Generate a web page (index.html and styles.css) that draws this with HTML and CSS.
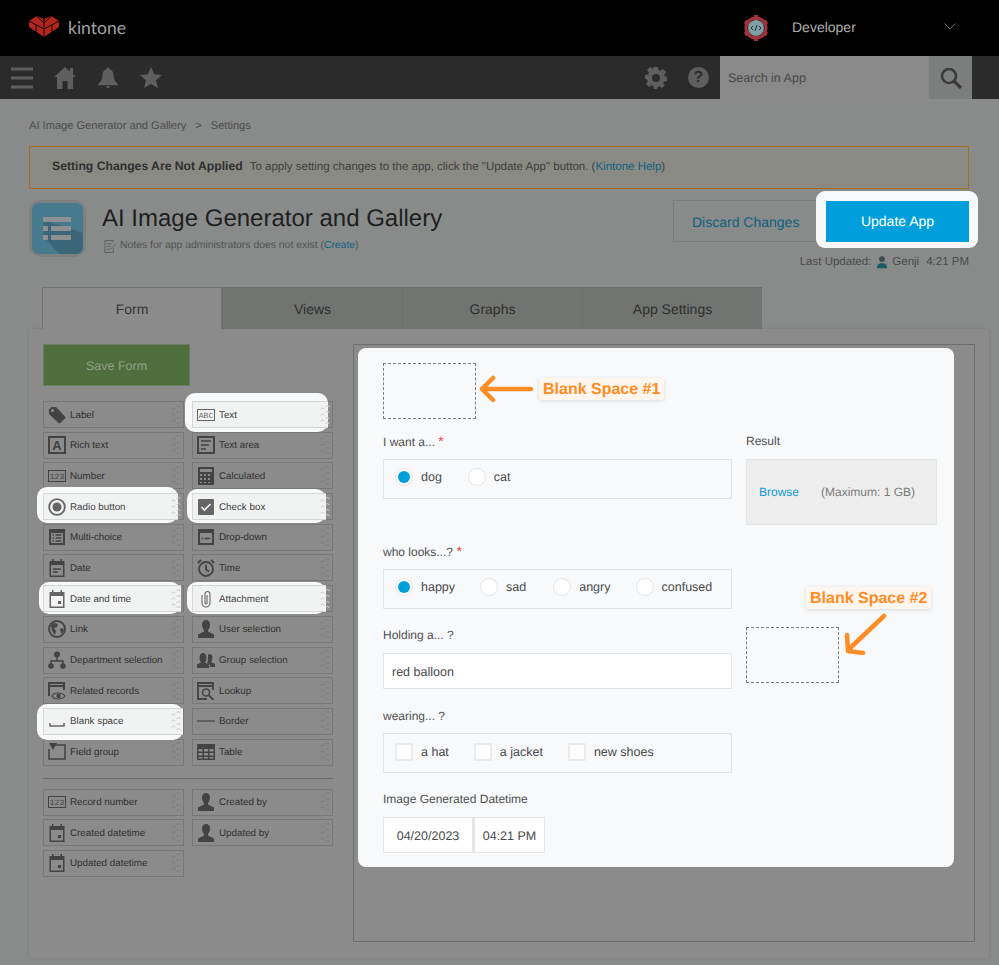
FILE: index.html
```html
<!DOCTYPE html>
<html lang="en">
<head>
<meta charset="utf-8">
<title>AI Image Generator and Gallery - Settings</title>
<link rel="stylesheet" href="styles.css">
</head>
<body>
<svg class="defs" width="0" height="0" aria-hidden="true">
  <symbol id="grip" viewBox="0 0 10 20"><path d="M1 4.500a1.500 1.500 0 0 1 3 0M1 10.500a1.500 1.500 0 0 1 3 0M1 16.500a1.500 1.500 0 0 1 3 0M6 2a1.500 1.500 0 0 1 3 0M6 8a1.500 1.500 0 0 1 3 0M6 14a1.500 1.500 0 0 1 3 0M6 19a1.500 1.500 0 0 1 3 0" fill="none" stroke="currentColor"/></symbol>
  <symbol id="i-label" viewBox="0 0 18 18"><path fill-rule="evenodd" d="M1 3.500 3.500 1H8l9 9.500a1.500 1.500 0 0 1 0 2L12.500 17a1.500 1.500 0 0 1-2 0L1 8zM4.500 3a1.500 1.500 0 1 0 0 3 1.500 1.500 0 0 0 0-3z" fill="currentColor"/></symbol>
  <symbol id="i-area" viewBox="0 0 18 18"><rect x="1" y="1" width="16" height="16" fill="none" stroke="currentColor" stroke-width="2"/><path d="M4 5h10M4 9h8M4 13h5" stroke="currentColor" stroke-width="1.500"/></symbol>
  <symbol id="i-calc" viewBox="0 0 18 18"><path fill-rule="evenodd" d="M1 0h16v18H1zM3 2v3h12V2zM3 7v2h2V7zm4 0v2h2V7zm4 0v2h2V7zM3 11v2h2v-2zm4 0v2h2v-2zm4 0v2h2v-2zM3 15v1h2v-1zm4 0v1h2v-1zm4 0v1h2v-1z" fill="currentColor"/></symbol>
  <symbol id="i-radio" viewBox="0 0 18 18"><circle cx="9" cy="9" r="7.800" fill="none" stroke="currentColor" stroke-width="1.800"/><circle cx="9" cy="9" r="4.500" fill="currentColor"/></symbol>
  <symbol id="i-check" viewBox="0 0 18 18"><rect x="1" y="1" width="16" height="16" rx="1" fill="currentColor"/><path d="m4.500 9 3 3 6-6" fill="none" stroke="#f1f3f2" stroke-width="1.600"/></symbol>
  <symbol id="i-multi" viewBox="0 0 18 18"><path fill-rule="evenodd" d="M1 1h16v16H1zM3 5v10h12V5z" fill="currentColor"/><path d="M4.500 7h1.500M7.500 7h6M4.500 10h1.500M7.500 10h6M4.500 13h1.500M7.500 13h6" stroke="currentColor" stroke-width="1.500"/></symbol>
  <symbol id="i-drop" viewBox="0 0 18 18"><path fill-rule="evenodd" d="M1 1h16v16H1zM3 5v10h12V5z" fill="currentColor"/><path d="M4.500 10.500h1.500M7.500 10.500h6" stroke="currentColor" stroke-width="1.500"/></symbol>
  <symbol id="i-date" viewBox="0 0 18 18"><path fill-rule="evenodd" d="M1.500 2H4V0h1.500v2h7V0H14v2h2.500v16h-15zM3 6v10.500h12V6z" fill="currentColor"/><path d="M5 10h8M5 13h5" stroke="currentColor" stroke-width="1.500"/></symbol>
  <symbol id="i-time" viewBox="0 0 18 18"><circle cx="9" cy="10" r="7" fill="none" stroke="currentColor" stroke-width="1.800"/><path d="M9 6v4.500l3 2M1 4l3-3M17 4l-3-3" fill="none" stroke="currentColor" stroke-width="1.800"/></symbol>
  <symbol id="i-dt" viewBox="0 0 18 18"><path fill-rule="evenodd" d="M1.500 2H4V0h1.500v2h7V0H14v2h2.500v16h-15zM3 6v10.500h12V6z" fill="currentColor"/><rect x="10" y="11" width="3" height="3" fill="currentColor"/></symbol>
  <symbol id="i-clip" viewBox="0 0 18 18"><path d="M5 5v8a4 4 0 0 0 8 0V4a2.500 2.500 0 0 0-5 0v9a1 1 0 0 0 2 0V5" fill="none" stroke="currentColor" stroke-width="1.100"/></symbol>
  <symbol id="i-link" viewBox="0 0 18 18"><circle cx="9" cy="9" r="8" fill="none" stroke="currentColor" stroke-width="1.800"/><path d="M3 5l3-2 4 1-1 3-3 1 2 3-1 4-3-4zM12 9l3-1 1 3-3 3z" fill="currentColor"/></symbol>
  <symbol id="i-user" viewBox="0 0 18 18"><path d="M9 0c2.500 0 4 2 4 4.500S12 9 11 10v1.500l6 3V18H1v-3.500l6-3V10C6 9 5 7 5 4.500S6.500 0 9 0z" fill="currentColor"/></symbol>
  <symbol id="i-dept" viewBox="0 0 18 18"><circle cx="9" cy="3.500" r="3" fill="currentColor"/><circle cx="3" cy="15" r="2.800" fill="currentColor"/><circle cx="15" cy="15" r="2.800" fill="currentColor"/><path d="M9 6v4M3 13v-3h12v3" fill="none" stroke="currentColor" stroke-width="1.400"/></symbol>
  <symbol id="i-group" viewBox="0 0 18 18"><path d="M12.500 3c2 0 3 1.500 3 3.500S14.700 10 14 11l4 2v3h-5v-2l-3-2c.7-1 1-3 1-5V3.500z" fill="currentColor"/><path d="M6 2c2 0 3.500 2 3.500 4.500S8.700 10.500 8 11.500l4 2V17H0v-3.500l4-2C3.300 10.500 2.500 9 2.500 6.500S4 2 6 2z" fill="currentColor"/></symbol>
  <symbol id="i-rel" viewBox="0 0 18 18"><path d="M1 14V1h15v7M1 4h15" fill="none" stroke="currentColor" stroke-width="2"/><path d="M4 14c2-4 10-4 13 0-3 4-11 4-13 0z" fill="none" stroke="currentColor" stroke-width="1.200"/><circle cx="10.500" cy="14" r="2.200" fill="currentColor"/></symbol>
  <symbol id="i-look" viewBox="0 0 18 18"><path d="M16 8V1H1v16h9M1 4h15" fill="none" stroke="currentColor" stroke-width="1.800"/><circle cx="9" cy="10.500" r="3.500" fill="none" stroke="currentColor" stroke-width="1.500"/><path d="m11.500 13 5 5" stroke="currentColor" stroke-width="1.800"/></symbol>
  <symbol id="i-blank" viewBox="0 0 18 18"><path d="M2 11v3h14v-3" fill="none" stroke="currentColor" stroke-width="1.500"/></symbol>
  <symbol id="i-border" viewBox="0 0 18 18"><path d="M0 9h18" stroke="currentColor" stroke-width="1.200"/></symbol>
  <symbol id="i-fgroup" viewBox="0 0 18 18"><path d="M6 2h11v14H1V6" fill="none" stroke="currentColor" stroke-width="1.500"/><path d="M1 0h8L5 7z" fill="currentColor"/></symbol>
  <symbol id="i-table" viewBox="0 0 18 18"><path fill-rule="evenodd" d="M0 1h18v16H0zM1.500 6v2.500h4V6zm5.500 0v2.500h4V6zm5.500 0v2.500h4V6zM1.500 10v2.500h4V10zm5.500 0v2.500h4V10zm5.500 0v2.500h4V10zM1.500 14v1.500h4V14zm5.500 0v1.500h4V14zm5.500 0v1.500h4V14z" fill="currentColor"/></symbol>
</svg>

<header class="top">
  <svg class="logo" viewBox="0 0 30 21" aria-hidden="true"><path d="M0 5 7.500 0 15 3l7.500-3L30 5v6L15 21 0 11z" fill="#b3261e"/><path d="M0 5l15 8 15-8M15 3v18M7.500 0 15 7l7.500-7M7 9v7M23 9v7" fill="none" stroke="#1a0505" stroke-width="1"/></svg>
  <span class="brand">kintone</span>
  <span class="grow"></span>
  <svg class="avatar" viewBox="0 0 26 28" aria-hidden="true"><path d="M13 1v5M13 22v5M2 7.500l4 2.500M24 7.500 20 10M2 20.500 6 18M24 20.500 20 18" stroke="#a5323a" stroke-width="4"/><circle cx="13" cy="14" r="10" fill="none" stroke="#a5323a" stroke-width="3"/><circle cx="13" cy="14" r="8" fill="#7f9fa7"/><path d="m10 12-2 2 2 2M16 12l2 2-2 2M14 11l-2 6" fill="none" stroke="#1c2d33" stroke-width="1"/></svg>
  <span class="who">Developer</span>
  <svg class="chev" viewBox="0 0 12 7" aria-hidden="true"><path d="m.5.500 5.500 5.500L11.500.500" fill="none" stroke="#6b6b6b"/></svg>
</header>

<nav class="bar">
  <svg class="nav-i burger" viewBox="0 0 22 22" aria-hidden="true"><path d="M0 2h22M0 11h22M0 20h22" stroke="#5e5e5e" stroke-width="3"/></svg>
  <svg class="nav-i home" viewBox="0 0 22 22" aria-hidden="true"><path d="M11 0l5 4.500V1h3v6.200l3 2.800h-3v12h-5.500v-8h-5v8H3V10H0z" fill="#5e5e5e"/></svg>
  <svg class="nav-i bell" viewBox="0 0 21 22" aria-hidden="true"><path d="M10.500 0c1 0 1.500.7 1.500 1.500C15 2.500 16.500 5 16.500 9c0 4 1.500 6 4.500 8.500v1H0v-1C3 15 4.500 13 4.500 9c0-4 1.500-6.500 4.500-7.500C9 .7 9.500 0 10.500 0zM8.500 19.500h4a2 2 0 0 1-4 0z" fill="#5e5e5e"/></svg>
  <svg class="nav-i star" viewBox="0 0 22 22" aria-hidden="true"><path d="M11 0l3.200 7.300 7.800.7-5.900 5.200 1.800 7.800L11 17l-6.900 4 1.800-7.800L0 8l7.800-.7z" fill="#5e5e5e"/></svg>
  <span class="grow"></span>
  <svg class="nav-i gear" viewBox="0 0 22 22" aria-hidden="true"><path fill-rule="evenodd" d="M9 0h4l.6 3 1.800.8L18 2l3 3-1.800 2.600.8 1.800 2 .6v4l-3 .6-.8 1.800L20 18l-3 3-2.600-1.800-1.800.8-.6 2H9l-.6-3-1.800-.8L4 20l-3-3 1.800-2.600-.8-1.800-2-.6V8l3-.6.8-1.800L2 3l3-3 2.600 1.800L8.400 1zM11 7a4 4 0 1 0 0 8 4 4 0 0 0 0-8z" fill="#5e5e5e"/></svg>
  <span class="help">?</span>
  <div class="search">
    <span class="search-text">Search in App</span>
    <span class="search-btn"><svg viewBox="0 0 22 22" aria-hidden="true"><circle cx="9" cy="9" r="7" fill="none" stroke="#3a3a3a" stroke-width="2.600"/><path d="m14 14 7 7" stroke="#3a3a3a" stroke-width="3.200"/></svg></span>
  </div>
</nav>

<main class="page">
  <p class="crumb">AI Image Generator and Gallery<span class="sep">&gt;</span>Settings</p>
  <p class="notice"><b>Setting Changes Are Not Applied</b>To apply setting changes to the app, click the "Update App" button. (<a>Kintone Help</a>)</p>

  <section class="head">
    <div class="app-ico"><svg viewBox="0 0 51 51" aria-hidden="true"><rect width="51" height="51" rx="7" fill="#47798f"/><path d="M11 17 51 30v14a7 7 0 0 1-7 7H27L11 33z" fill="#3b6579"/><path d="M11 14h28v5H11zM11 23h5v5h-5zM19 23h20v5H19zM11 32h5v5h-5zM19 32h20v5H19z" fill="#8d9192"/></svg></div>
    <div class="app-title">
      <h1>AI Image Generator and Gallery</h1>
      <p class="notes"><svg viewBox="0 0 14 14" aria-hidden="true"><path d="M10 9v4.500H1V.5h9v2M3 4h5M3 7h4M3 10h3M7 10l6-6" fill="none" stroke="#5e605f"/></svg>Notes for app administrators does not exist (<a>Create</a>)</p>
    </div>
    <div class="actions">
      <div class="btns">
        <span class="discard">Discard Changes</span>
        <span class="update-spot"><span class="update">Update App</span></span>
      </div>
      <p class="updated">Last Updated:<svg viewBox="0 0 12 15" aria-hidden="true"><circle cx="6" cy="4" r="3.500" fill="#3d4a4c"/><path d="M0 15c0-5 2-6 6-6s6 1 6 6z" fill="#1d5a68"/></svg>Genji<span class="at">4:21 PM</span></p>
    </div>
  </section>

  <div class="tabs">
    <span class="tab on">Form</span><span class="tab">Views</span><span class="tab">Graphs</span><span class="tab">App Settings</span>
  </div>

  <section class="panel">
    <aside class="side">
      <div class="save">Save Form</div>
      <div class="palette">
        <div class="item"><svg class="ico"><use href="#i-label"/></svg><span>Label</span><svg class="grip"><use href="#grip"/></svg></div>
        <div class="item lit s-text"><svg class="ico" viewBox="0 0 18 18"><rect x=".5" y="3.500" width="17" height="11" fill="none" stroke="currentColor"/><text x="9" y="11.800" text-anchor="middle" class="glyph-s">ABC</text></svg><span>Text</span><svg class="grip"><use href="#grip"/></svg></div>
        <div class="item"><svg class="ico" viewBox="0 0 18 18"><rect x="1" y="1" width="16" height="16" fill="none" stroke="currentColor" stroke-width="2"/><text x="9" y="14" text-anchor="middle" class="glyph-a">A</text></svg><span>Rich text</span><svg class="grip"><use href="#grip"/></svg></div>
        <div class="item"><svg class="ico"><use href="#i-area"/></svg><span>Text area</span><svg class="grip"><use href="#grip"/></svg></div>
        <div class="item"><svg class="ico" viewBox="0 0 18 18"><rect x=".5" y="3.500" width="17" height="11" fill="none" stroke="currentColor"/><text x="9" y="12" text-anchor="middle" class="glyph-s">123</text></svg><span>Number</span><svg class="grip"><use href="#grip"/></svg></div>
        <div class="item"><svg class="ico"><use href="#i-calc"/></svg><span>Calculated</span><svg class="grip"><use href="#grip"/></svg></div>
        <div class="item lit s-radio"><svg class="ico"><use href="#i-radio"/></svg><span>Radio button</span><svg class="grip"><use href="#grip"/></svg></div>
        <div class="item lit s-check"><svg class="ico"><use href="#i-check"/></svg><span>Check box</span><svg class="grip"><use href="#grip"/></svg></div>
        <div class="item"><svg class="ico"><use href="#i-multi"/></svg><span>Multi-choice</span><svg class="grip"><use href="#grip"/></svg></div>
        <div class="item"><svg class="ico"><use href="#i-drop"/></svg><span>Drop-down</span><svg class="grip"><use href="#grip"/></svg></div>
        <div class="item"><svg class="ico"><use href="#i-date"/></svg><span>Date</span><svg class="grip"><use href="#grip"/></svg></div>
        <div class="item"><svg class="ico"><use href="#i-time"/></svg><span>Time</span><svg class="grip"><use href="#grip"/></svg></div>
        <div class="item lit s-dt"><svg class="ico"><use href="#i-dt"/></svg><span>Date and time</span><svg class="grip"><use href="#grip"/></svg></div>
        <div class="item lit s-att"><svg class="ico"><use href="#i-clip"/></svg><span>Attachment</span><svg class="grip"><use href="#grip"/></svg></div>
        <div class="item"><svg class="ico"><use href="#i-link"/></svg><span>Link</span><svg class="grip"><use href="#grip"/></svg></div>
        <div class="item"><svg class="ico"><use href="#i-user"/></svg><span>User selection</span><svg class="grip"><use href="#grip"/></svg></div>
        <div class="item"><svg class="ico"><use href="#i-dept"/></svg><span>Department selection</span><svg class="grip"><use href="#grip"/></svg></div>
        <div class="item"><svg class="ico"><use href="#i-group"/></svg><span>Group selection</span><svg class="grip"><use href="#grip"/></svg></div>
        <div class="item"><svg class="ico"><use href="#i-rel"/></svg><span>Related records</span><svg class="grip"><use href="#grip"/></svg></div>
        <div class="item"><svg class="ico"><use href="#i-look"/></svg><span>Lookup</span><svg class="grip"><use href="#grip"/></svg></div>
        <div class="item lit s-blank"><svg class="ico"><use href="#i-blank"/></svg><span>Blank space</span><svg class="grip"><use href="#grip"/></svg></div>
        <div class="item"><svg class="ico"><use href="#i-border"/></svg><span>Border</span><svg class="grip"><use href="#grip"/></svg></div>
        <div class="item"><svg class="ico"><use href="#i-fgroup"/></svg><span>Field group</span><svg class="grip"><use href="#grip"/></svg></div>
        <div class="item"><svg class="ico"><use href="#i-table"/></svg><span>Table</span><svg class="grip"><use href="#grip"/></svg></div>
      </div>
      <hr class="rule">
      <div class="palette">
        <div class="item"><svg class="ico" viewBox="0 0 18 18"><rect x=".5" y="3.500" width="17" height="11" fill="none" stroke="currentColor"/><text x="9" y="12" text-anchor="middle" class="glyph-s">123</text></svg><span>Record number</span><svg class="grip"><use href="#grip"/></svg></div>
        <div class="item"><svg class="ico"><use href="#i-user"/></svg><span>Created by</span><svg class="grip"><use href="#grip"/></svg></div>
        <div class="item"><svg class="ico"><use href="#i-dt"/></svg><span>Created datetime</span><svg class="grip"><use href="#grip"/></svg></div>
        <div class="item"><svg class="ico"><use href="#i-user"/></svg><span>Updated by</span><svg class="grip"><use href="#grip"/></svg></div>
        <div class="item"><svg class="ico"><use href="#i-dt"/></svg><span>Updated datetime</span><svg class="grip"><use href="#grip"/></svg></div>
      </div>
    </aside>

    <div class="canvas">
      <div class="card">
        <div class="col-main">
          <div class="blank"></div>
          <div class="f-label l-first">I want a... <em>*</em></div>
          <div class="choice">
            <span class="opt w-dog"><i class="dot on"></i>dog</span>
            <span class="opt"><i class="dot"></i>cat</span>
          </div>
          <div class="f-label l-who">who looks...? <em>*</em></div>
          <div class="choice">
            <span class="opt w-happy"><i class="dot on"></i>happy</span>
            <span class="opt w-sad"><i class="dot"></i>sad</span>
            <span class="opt w-angry"><i class="dot"></i>angry</span>
            <span class="opt"><i class="dot"></i>confused</span>
          </div>
          <div class="f-label l-hold">Holding a... ?</div>
          <div class="input">red balloon</div>
          <div class="f-label l-wear">wearing... ?</div>
          <div class="choice tight">
            <span class="opt w-hat"><i class="box"></i>a hat</span>
            <span class="opt w-jacket"><i class="box"></i>a jacket</span>
            <span class="opt"><i class="box"></i>new shoes</span>
          </div>
          <div class="f-label l-img">Image Generated Datetime</div>
          <div class="dt"><span class="dt-d">04/20/2023</span><span class="dt-t">04:21 PM</span></div>
        </div>
        <div class="col-side">
          <div class="f-label l-res">Result</div>
          <div class="file"><a>Browse</a><span>(Maximum: 1 GB)</span></div>
          <div class="blank b2"></div>
        </div>
        <span class="tag t1">Blank Space #1</span>
        <span class="tag t2">Blank Space #2</span>
        <svg class="arrow a1" viewBox="0 0 56 30" aria-hidden="true"><path d="M53 15H5M15 4 4 15l11 11" fill="none" stroke="#ff8c24" stroke-width="4.500" stroke-linecap="round" stroke-linejoin="round"/></svg>
        <svg class="arrow a2" viewBox="0 0 44 42" aria-hidden="true"><path d="M41 3 5 37M4 22l1 16 15 2" fill="none" stroke="#ff8c24" stroke-width="4.500" stroke-linecap="round" stroke-linejoin="round"/></svg>
      </div>
    </div>
  </section>
</main>
</body>
</html>
```

FILE: styles.css
```css
* { box-sizing: border-box; }
html, body { margin: 0; height: 965px; overflow: hidden; }
body { background: #7f807f; font-family: "Liberation Sans", Arial, sans-serif; color: #3a3a3a; text-rendering: geometricPrecision; }
p, h1 { margin: 0; }
.defs { position: absolute; }
.grow { flex: 1; }

.top { height: 56px; background: #000; display: flex; align-items: center; padding-left: 29px; }
.logo { width: 30px; height: 21px; margin-top: -3px; }
.brand { margin-left: 9px; font-size: 17.500px; color: #a3a3a3; font-family: "Lato", sans-serif; margin-top: -2px; }
.avatar { width: 26px; height: 28px; margin-top: -1px; }
.who { margin-left: 23px; font-size: 14px; color: #aeaeae; width: 152px; margin-top: -2px; }
.chev { width: 12px; height: 7px; margin-right: 43px; margin-top: -4px; }

.bar { height: 43px; background: #2b2b2b; display: flex; align-items: center; padding-left: 11px; padding-right: 27px; }
.nav-i { width: 22px; height: 22px; margin-right: 21px; }
.home { margin-right: 22px; }
.bell { width: 20px; margin-right: 22px; }
.help { width: 21px; height: 21px; border-radius: 50%; background: #5e5e5e; color: #2b2b2b; font-weight: 700; font-size: 16px; line-height: 21px; text-align: center; margin-right: 11px; }
.search { width: 252px; height: 43px; display: flex; background: #888988; }
.search-text { flex: 1; font-size: 12.500px; color: #484a49; line-height: 44px; padding-left: 8px; }
.search-btn { width: 43px; background: #7c7e7d; display: flex; align-items: center; justify-content: center; }
.search-btn svg { width: 22px; height: 22px; }

.page { height: 866px; background: #898b8a; padding: 0 0 0 29px; }
.crumb { padding-top: 21px; font-size: 11.100px; line-height: 13px; color: #4b4d4c; }
.sep { margin: 0 9px; }
.notice { margin-top: 13px; width: 940px; height: 43px; border: 1px solid #a36f1f; background: #8a8a84; padding-left: 22px; line-height: 39px; font-size: 11.500px; color: #3f403f; }
.notice b { font-size: 12.200px; margin-right: 7px; color: #2f302f; }
.notice a, .notes a { color: #0f637f; }

.head { display: flex; margin-top: 11px; height: 87px; width: 940px; }
.app-ico { width: 57px; height: 57px; border-radius: 12px; background: #7c807f; padding: 3px; }
.app-ico svg { width: 51px; height: 51px; display: block; }
.app-title { margin-left: 16px; flex: 1; }
h1 { font-weight: 400; font-size: 24px; line-height: 30px; color: #1e1f1f; margin-top: 4px; }
.notes { margin-top: 5px; margin-left: 2px; font-size: 10.400px; line-height: 14px; color: #525453; display: flex; align-items: center; white-space: pre; }
.notes svg { width: 13px; height: 13px; margin-right: 3px; }
.actions { width: 296px; }
.btns { display: flex; }
.discard { width: 153px; height: 42px; border: 1px solid #7b7d7c; border-right: 0; color: #0f637f; font-size: 14px; line-height: 42px; padding-left: 18px; }
.update-spot { position: relative; width: 143px; height: 41px; margin-top: 1px; }
.update-spot::before { content: ""; position: absolute; left: -10px; right: -9px; top: -10px; bottom: -6px; background: #f8f9fb; border-radius: 9px; }
.update { position: relative; display: block; height: 41px; background: #009fdb; color: #fff; font-size: 14px; line-height: 41px; text-align: center; }
.updated { display: flex; justify-content: flex-end; align-items: center; margin-top: 12px; font-size: 11.500px; line-height: 16px; color: #4a4c4b; }
.updated svg { width: 10px; height: 14px; margin: 0 5px 0 6px; }
.at { margin-left: 7px; }

.tabs { display: flex; margin-left: 13px; height: 42px; }
.tab { width: 180px; background: #727472; border-top: 1px solid #6b6d6b; text-align: center; font-size: 14px; line-height: 42px; color: #2e2f2e; }
.tab + .tab { border-left: 1px solid #6c6e6c; }
.tab.on { background: #8b8b8b; border: 1px solid #727372; border-bottom: 0; color: #353535; }

.panel { width: 960px; height: 629px; background: #8b8b8b; display: flex; padding: 15px 14px 16px 14px; box-shadow: 0 0 3px rgba(0,0,0,.12); }
.side { width: 290px; margin-right: 20px; }
.save { width: 147px; height: 42px; background: #4e6e3e; border: 1px solid #6a7b60; color: #8fa083; font-size: 12.500px; line-height: 43px; text-align: center; }
.palette { display: grid; grid-template-columns: 141px 141px; column-gap: 8px; row-gap: 3.700px; grid-auto-rows: 27px; }
.save + .palette { margin-top: 15px; }
.rule { border: 0; border-top: 1px solid #6d6f6d; margin: 12px 0 10px; width: 290px; }

.item { display: flex; align-items: center; height: 27px; border: 1px solid #777977; padding-left: 4px; font-size: 9.800px; color: #303030; }
.ico { width: 18px; height: 18px; margin-right: 4px; color: #434343; flex: none; }
.item span { flex: 1; white-space: nowrap; padding-top: 1px; }
.grip { width: 10px; height: 20px; margin-right: 2px; color: #7a7c7a; flex: none; }

.lit { position: relative; color: #424242; }
.lit::before { content: ""; position: absolute; left: var(--l); right: var(--r); top: var(--t); bottom: var(--b); background: #f8f9fb; border-radius: 10px; }
.lit::after { content: ""; position: absolute; left: -1px; right: var(--r); top: -1px; bottom: -1px; background: #f1f3f2; border: 1px solid #d5d8d6; border-right: 0; }
.lit .ico, .lit span, .lit .grip { position: relative; z-index: 1; }
.lit .ico { color: #666; }
.lit .grip { color: #c8cbc9; }
.s-text { --l: -8px; --r: 4px; --t: -9px; --b: -5px; }
.s-radio { --l: -7px; --r: 5px; --t: -7px; --b: -4px; }
.s-check { --l: -6px; --r: 6px; --t: -5px; --b: -4px; }
.s-dt { --l: -5px; --r: 2px; --t: -4px; --b: -3px; }
.s-att { --l: -6px; --r: 6px; --t: -4px; --b: -3px; }
.s-blank { --l: -7px; --r: 0px; --t: -5px; --b: -6px; }

.glyph-a { font: 700 13px "Liberation Sans", sans-serif; fill: currentColor; }
.glyph-s { font: 400 8px "Liberation Mono", monospace; fill: currentColor; }

.canvas { width: 622px; height: 598px; border: 1px solid #6d6f6d; padding: 3px 0 0 4px; }
.card { position: relative; width: 596px; height: 519px; background: #f8f9fb; border-radius: 8px; padding: 15px 17px 0 25px; display: flex; gap: 14px; color: #4a4a4a; font-size: 12.500px; }
.col-main { width: 349px; }
.col-side { width: 191px; }
.blank { width: 93px; height: 56px; border: 1px dashed #7d7d7d; }
.f-label { height: 18px; line-height: 18px; font-size: 12px; color: #4f4f4f; }
.f-label em { color: #ef3b3b; font-style: normal; font-size: 14px; }
.l-first { margin-top: 13px; }
.l-who { margin-top: 43px; }
.l-hold { margin-top: 17px; }
.l-wear { margin-top: 18px; }
.l-img { margin-top: 17px; }
.l-res { margin-top: 69px; }
.choice { margin-top: 9px; width: 349px; height: 40px; border: 1px solid #e2e4e5; display: flex; align-items: center; padding: 0 0 4px 11px; }
.tight { margin-top: 8px; padding-bottom: 2px; }
.opt { display: flex; align-items: center; }
.dot { width: 18px; height: 18px; border-radius: 50%; border: 1px solid #e5e6e7; background: #fff; margin-right: 8px; position: relative; }
.dot.on::after { content: ""; position: absolute; inset: 2px; border-radius: 50%; background: #009fdb; }
.box { width: 18px; height: 18px; background: #fff; border: 2px solid #eaebec; margin-right: 8px; }
.w-dog { margin-right: 26px; }
.w-happy { margin-right: 25px; }
.w-sad { margin-right: 27px; }
.w-angry { margin-right: 25px; }
.w-hat { margin-right: 25px; }
.w-jacket { margin-right: 25px; }
.input { margin-top: 9px; width: 349px; height: 36px; background: #fff; border: 1px solid #e2e4e5; line-height: 36px; padding-left: 8px; }
.dt { margin-top: 9px; display: flex; height: 36px; line-height: 36px; }
.dt-d, .dt-t { background: #fff; border: 1px solid #e5e6e7; text-align: center; }
.dt-d { width: 90px; }
.dt-t { width: 72px; border-left: 2px solid #e5e6e7; }
.file { margin-top: 9px; height: 66px; background: #eeeeee; border: 1px solid #e4e5e5; display: flex; align-items: center; padding-left: 12px; color: #7b7b7b; font-size: 12px; }
.file a { color: #0f9bd7; margin-right: 22px; }
.b2 { margin-top: 102px; }

.tag { position: absolute; background: #fff7ef; color: #ff8c24; font-weight: 700; font-size: 16px; line-height: 24px; height: 22px; padding: 0 4px; border-radius: 2px; box-shadow: 0 1px 4px rgba(0,0,0,.12); white-space: nowrap; }
.t1 { left: 181px; top: 30px; }
.t2 { left: 448px; top: 239px; }
.arrow { position: absolute; }
.a1 { left: 120px; top: 26px; width: 56px; height: 30px; }
.a2 { left: 485px; top: 265px; width: 44px; height: 42px; }
```
